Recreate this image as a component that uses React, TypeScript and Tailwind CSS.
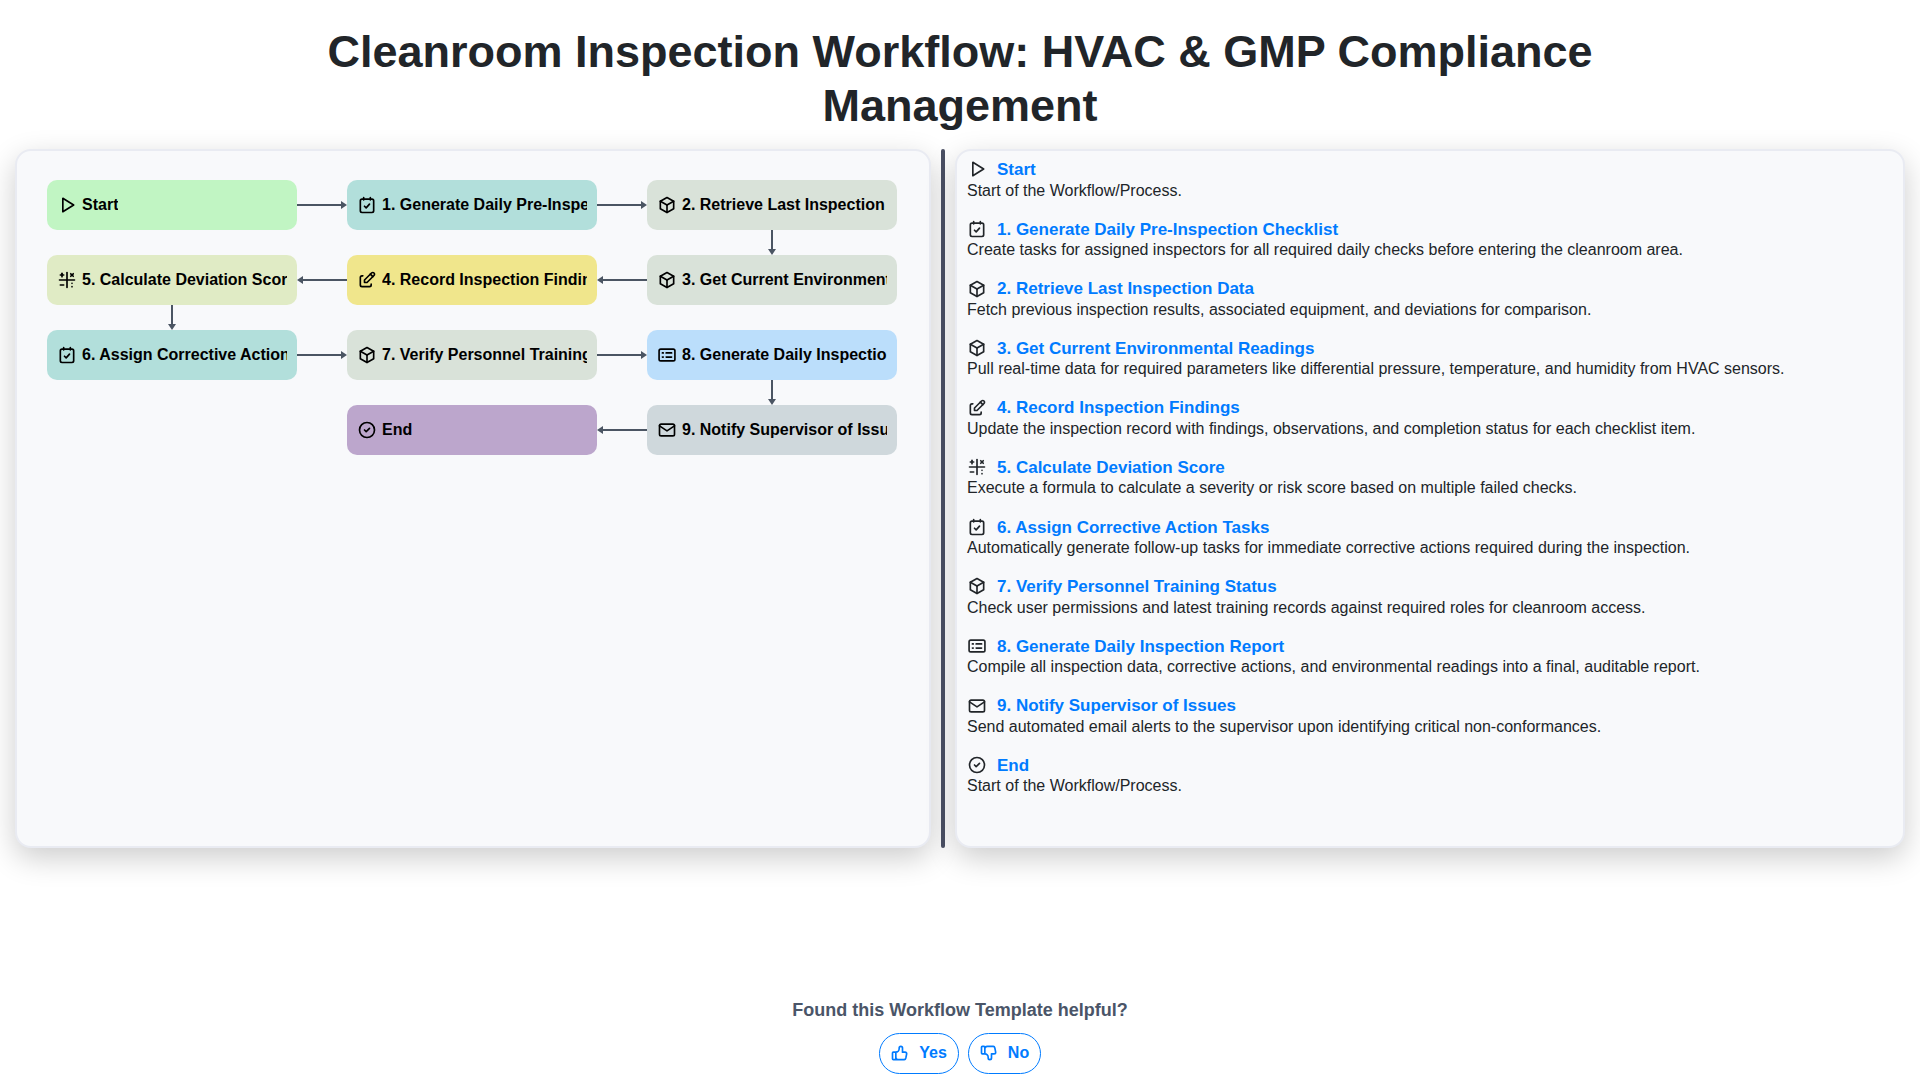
import type { ReactNode } from 'react';
import { TbPlayerPlay, TbBox, TbEdit, TbMathSymbols, TbMail, TbCircleCheck, TbThumbUp, TbThumbDown } from 'react-icons/tb';

function TaskIcon({ className }: { className?: string }) {
  return (
    <svg className={className} viewBox="0 0 24 24" fill="none" stroke="currentColor" strokeWidth="2" strokeLinecap="round" strokeLinejoin="round">
      <rect x="4" y="5" width="16" height="16" rx="2" />
      <path d="M8 3v3M16 3v3M9 13.5l2 2 4-4.5" />
    </svg>
  );
}

function ReportIcon({ className }: { className?: string }) {
  return (
    <svg className={className} viewBox="0 0 24 24" fill="none" stroke="currentColor" strokeWidth="2" strokeLinecap="round" strokeLinejoin="round">
      <rect x="2.5" y="5" width="19" height="14" rx="2" />
      <path d="M6.5 9.5h1M6.5 14.5h1M11 9.5h6.5M11 14.5h6.5" />
    </svg>
  );
}

type IconType = ({ className }: { className?: string }) => ReactNode;

const steps: { title: string; desc: string; icon: IconType }[] = [
  { title: 'Start', desc: 'Start of the Workflow/Process.', icon: TbPlayerPlay },
  { title: '1. Generate Daily Pre-Inspection Checklist', desc: 'Create tasks for assigned inspectors for all required daily checks before entering the cleanroom area.', icon: TaskIcon },
  { title: '2. Retrieve Last Inspection Data', desc: 'Fetch previous inspection results, associated equipment, and deviations for comparison.', icon: TbBox },
  { title: '3. Get Current Environmental Readings', desc: 'Pull real-time data for required parameters like differential pressure, temperature, and humidity from HVAC sensors.', icon: TbBox },
  { title: '4. Record Inspection Findings', desc: 'Update the inspection record with findings, observations, and completion status for each checklist item.', icon: TbEdit },
  { title: '5. Calculate Deviation Score', desc: 'Execute a formula to calculate a severity or risk score based on multiple failed checks.', icon: TbMathSymbols },
  { title: '6. Assign Corrective Action Tasks', desc: 'Automatically generate follow-up tasks for immediate corrective actions required during the inspection.', icon: TaskIcon },
  { title: '7. Verify Personnel Training Status', desc: 'Check user permissions and latest training records against required roles for cleanroom access.', icon: TbBox },
  { title: '8. Generate Daily Inspection Report', desc: 'Compile all inspection data, corrective actions, and environmental readings into a final, auditable report.', icon: ReportIcon },
  { title: '9. Notify Supervisor of Issues', desc: 'Send automated email alerts to the supervisor upon identifying critical non-conformances.', icon: TbMail },
  { title: 'End', desc: 'Start of the Workflow/Process.', icon: TbCircleCheck },
];

function Node({ step, bg }: { step: number; bg: string }) {
  const Icon = steps[step].icon;
  return (
    <div className={`flex h-[50px] items-center gap-[5px] overflow-hidden rounded-[10px] pl-[10px] pr-[10px] text-[16px] font-bold text-black ${bg}`}>
      <Icon className="h-[20px] w-[20px] shrink-0" />
      <span className="overflow-hidden whitespace-nowrap">{steps[step].title}</span>
    </div>
  );
}

function ArrowH({ left }: { left?: boolean }) {
  return (
    <svg className="self-center" width="50" height="10" viewBox="0 0 50 10" fill="#4b5563">
      {left ? <path d="M0 5l6-4v3h44v2H6v3z" /> : <path d="M50 5l-6-4v3H0v2h44v3z" />}
    </svg>
  );
}

function ArrowDown() {
  return (
    <svg className="justify-self-center" width="10" height="25" viewBox="0 0 10 25" fill="#4b5563">
      <path d="M5 25l-4-6h3V0h2v19h3z" />
    </svg>
  );
}

function Flowchart() {
  return (
    <div className="grid grid-cols-[250px_50px_250px_50px_250px] grid-rows-[50px_25px_50px_25px_50px_25px_50px]">
      <Node step={0} bg="bg-[#c1f5c3]" />
      <ArrowH />
      <Node step={1} bg="bg-[#b2dfdb]" />
      <ArrowH />
      <Node step={2} bg="bg-[#d9e2d9]" />

      <div className="col-start-5">
        <div className="flex justify-center"><ArrowDown /></div>
      </div>

      <Node step={5} bg="bg-[#e0ebc5]" />
      <ArrowH left />
      <Node step={4} bg="bg-[#f0e68c]" />
      <ArrowH left />
      <Node step={3} bg="bg-[#d9e2d9]" />

      <div className="col-start-1 col-end-2">
        <div className="flex justify-center"><ArrowDown /></div>
      </div>
      <div className="col-span-4" />

      <Node step={6} bg="bg-[#b2dfdb]" />
      <ArrowH />
      <Node step={7} bg="bg-[#d9e2d9]" />
      <ArrowH />
      <Node step={8} bg="bg-[#bbdefb]" />

      <div className="col-start-5">
        <div className="flex justify-center"><ArrowDown /></div>
      </div>

      <div className="col-start-3">
        <Node step={10} bg="bg-[#bca6cc]" />
      </div>
      <ArrowH left />
      <Node step={9} bg="bg-[#cfd8dc]" />
    </div>
  );
}

const panel = 'h-[699px] rounded-[16px] border-2 border-[#e9ebf2] bg-[#f8f9fb] shadow-[0_10px_30px_rgba(0,0,0,0.2)]';

export default function App() {
  return (
    <div className="h-[1080px] overflow-hidden bg-white font-['Liberation_Sans',Arial,sans-serif]">
      <h1 className="mx-auto w-[1400px] pt-[25px] text-center text-[45px] font-bold leading-[1.2] text-[#212529]">
        Cleanroom Inspection Workflow: HVAC &amp; GMP Compliance Management
      </h1>

      <div className="mt-[16px] flex px-[15px]">
        <div className={`w-[916px] shrink-0 pl-[30px] pt-[29px] ${panel}`}>
          <Flowchart />
        </div>
        <div className="mx-[10px] h-[699px] w-[4px] shrink-0 rounded-sm bg-[#4a4f63]" />
        <div className={`w-[950px] shrink-0 pl-[10px] pt-[8.4px] ${panel}`}>
          {steps.map(({ title, desc, icon: Icon }) => (
            <div key={title} className="mb-[19.2px]">
              <div className="flex h-[21.2px] items-center text-[17px] font-bold text-[#007bff]">
                <span className="mr-[10px] flex w-[20px] justify-center pb-[1px] text-[#212529]">
                  <Icon className="h-[20px] w-[20px] shrink-0" />
                </span>
                {title}
              </div>
              <p className="text-[16px] leading-[1.2] text-[#212529]">{desc}</p>
            </div>
          ))}
        </div>
      </div>

      <div className="mt-[152px] flex flex-col items-center">
        <p className="text-[18px] font-bold leading-[1.2] text-[#4a5568]">Found this Workflow Template helpful?</p>
        <div className="mt-[11px] flex gap-[9px]">
          <button className="flex h-[41px] w-[80px] items-center justify-center gap-[9px] rounded-full border border-[#007bff] pr-[1px] text-[16px] font-bold text-[#007bff]">
            <TbThumbUp className="h-[20px] w-[20px]" />
            Yes
          </button>
          <button className="flex h-[41px] w-[73px] items-center justify-center gap-[9px] rounded-full border border-[#007bff] pr-[1px] text-[16px] font-bold text-[#007bff]">
            <TbThumbDown className="h-[20px] w-[20px]" />
            No
          </button>
        </div>
      </div>
    </div>
  );
}
